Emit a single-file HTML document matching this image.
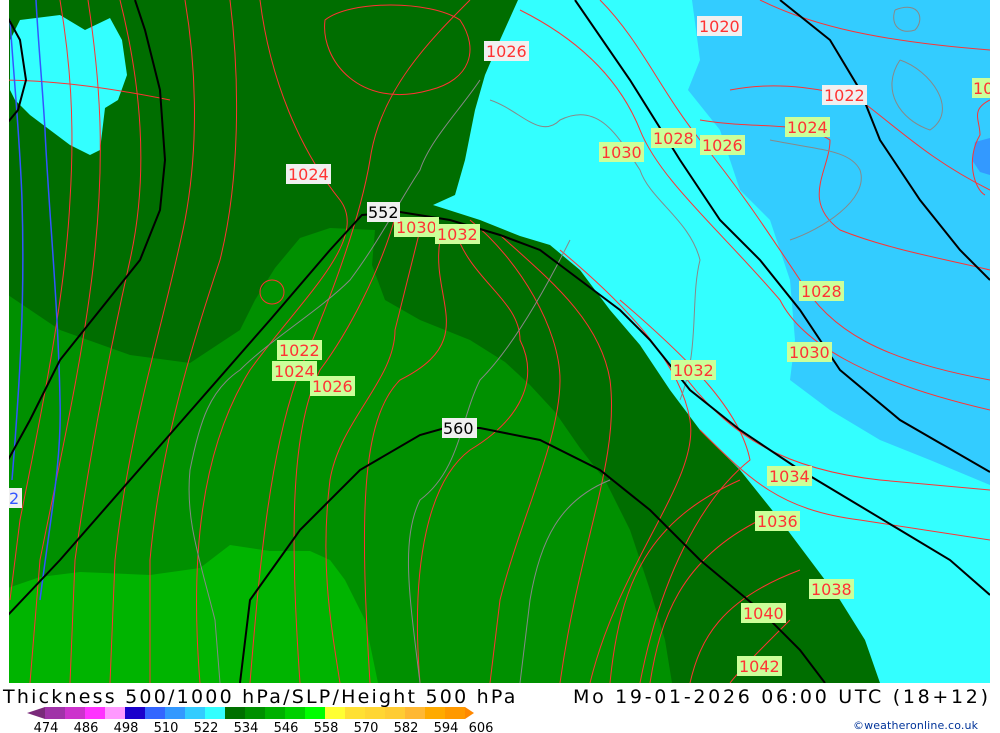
<!DOCTYPE html>
<html><head><meta charset="utf-8"><style>
body{margin:0;background:#fff;width:1000px;height:733px;overflow:hidden;position:relative;font-family:"Liberation Sans",sans-serif}
svg{position:absolute;left:0;top:0}
.lb{font-family:"DejaVu Sans","Liberation Sans",sans-serif;font-size:16px;fill:#ff3333}
</style></head><body>
<svg width="1000" height="733" viewBox="0 0 1000 733">
<defs><clipPath id="m"><rect x="9" y="0" width="981" height="683"/></clipPath></defs>
<g clip-path="url(#m)">
<rect x="0" y="0" width="1000" height="683" fill="#006e00"/>
<path d="M8,295 L60,330 L130,355 L190,363 L240,330 L255,300 L275,268 L300,238 L330,228 L375,230 L372,265 L385,300 L420,320 L470,340 L505,362 L530,385 L555,412 L580,448 L605,480 L630,530 L650,590 L665,640 L672,683 L8,683Z" fill="#009000"/>
<path d="M8,588 L40,577 L80,572 L150,575 L200,568 L230,545 L270,551 L310,551 L330,560 L345,580 L365,620 L378,683 L8,683Z" fill="#00b400"/>
<path d="M10,40 L20,20 L60,15 L85,30 L110,18 L122,40 L127,75 L118,100 L105,108 L100,150 L90,155 L70,145 L50,130 L30,115 L15,100 L10,90Z" fill="#33ffff"/>
<path d="M518,0 L500,40 L485,75 L475,110 L465,160 L455,195 L433,205 L480,220 L520,236 L550,245 L580,270 L610,310 L640,345 L670,390 L700,430 L740,470 L780,520 L810,560 L840,600 L865,640 L880,683 L990,683 L990,0Z" fill="#33ffff"/>
<path d="M692,0 L700,60 L688,90 L720,130 L740,190 L770,220 L790,280 L795,340 L790,380 L830,410 L880,440 L930,460 L990,485 L990,0Z" fill="#33ccff"/>
<path d="M990,138 L975,142 L972,160 L980,172 L990,175Z" fill="#3399ff"/>
<g fill="none" stroke="#ff3333" stroke-width="1">
<path d="M60,0 C70,60 75,120 70,200 C65,300 40,420 20,520 L10,600"/>
<path d="M88,0 C100,80 105,150 95,250 C85,350 60,460 40,560 L30,683"/>
<path d="M120,0 C140,80 150,170 130,260 C110,350 90,450 75,560 L70,683"/>
<path d="M185,0 C195,60 200,140 185,220 C165,320 130,420 115,560 L110,683"/>
<path d="M230,0 C240,80 240,180 220,260 C190,350 160,450 150,560 L150,683"/>
<path d="M325,20 C320,60 360,110 430,90 C470,80 480,50 460,20 C430,0 350,0 325,20Z"/>
<path d="M260,0 C270,80 300,150 340,200 C370,240 300,300 250,370 C200,450 190,560 200,683"/>
<path d="M470,0 C430,40 380,90 370,160 C360,220 330,300 300,370 C270,450 260,560 250,683"/>
<path d="M395,218 C380,270 350,330 320,370 C290,430 290,540 300,683"/>
<path d="M420,230 C410,270 400,310 395,330 C395,380 340,420 330,480 C320,560 330,620 340,683"/>
<path d="M440,240 C430,300 480,340 400,380 C360,420 360,520 370,683"/>
<path d="M455,230 C470,280 520,300 520,340 C540,380 520,420 470,450 C430,480 410,560 420,683"/>
<path d="M470,220 C520,260 560,330 560,380 C560,440 520,520 500,600 L490,683"/>
<path d="M500,235 C550,280 600,320 610,380 C620,460 580,540 560,683"/>
<path d="M560,250 C620,300 680,360 690,420 C700,480 620,560 590,683"/>
<path d="M620,300 C690,360 740,410 750,460 C700,500 660,580 640,683"/>
<path d="M680,370 C730,440 790,470 880,480 L990,490"/>
<path d="M700,430 C750,480 780,510 860,520 L990,540"/>
<path d="M740,480 C650,520 620,580 610,683"/>
<path d="M760,520 C680,560 660,620 650,683"/>
<path d="M800,570 C720,600 700,640 690,683"/>
<path d="M790,620 C760,650 740,670 730,683"/>
<path d="M600,0 C640,40 660,90 700,140 C740,190 760,220 800,280 C830,330 880,360 990,380"/>
<path d="M520,10 C580,40 620,80 640,130 C660,180 720,230 780,300 C800,340 860,380 990,410"/>
<path d="M730,90 C780,80 830,90 860,100 C900,130 930,160 990,190"/>
<path d="M700,120 C760,130 800,120 830,140 C830,170 800,200 840,230 C890,250 950,260 990,270"/>
<path d="M0,80 C60,80 120,90 170,100"/>
<path d="M760,0 C800,20 860,40 990,50"/>
<path d="M990,100 C970,110 980,120 980,135 C965,160 975,190 985,195"/>
<circle cx="272" cy="292" r="12"/>
</g>
<g fill="none" stroke="#3355ff" stroke-width="1.5">
<path d="M36,0 C38,40 42,80 45,130 C48,200 58,300 60,400 C62,460 50,520 40,600"/>
<path d="M10,20 C14,80 20,140 22,200 C25,300 20,380 12,480"/>
</g>
<g fill="none" stroke="#888" stroke-width="1">
<path d="M480,80 C460,110 430,140 420,170 C400,200 380,240 350,280 C320,310 270,340 240,370 C210,390 200,420 190,470 C185,520 200,560 215,620 L220,683"/>
<path d="M490,100 C520,110 540,140 560,120 C600,100 620,140 640,170 C650,200 690,220 700,260 C690,300 700,350 680,400"/>
<path d="M570,240 C540,300 510,350 480,380 C460,420 460,470 420,500 C400,540 410,600 420,683"/>
<path d="M610,480 C560,500 540,540 530,600 L520,683"/>
<path d="M770,140 C820,150 850,150 860,170 C870,200 820,230 790,240"/>
<path d="M895,10 C920,0 925,20 915,30 C900,35 890,25 895,10"/>
<path d="M900,60 C930,70 960,110 930,130 C900,120 880,90 900,60"/>
</g>
<g fill="none" stroke="#000" stroke-width="2">
<path d="M8,18 L20,40 L26,80 L18,110 L8,122"/>
<path d="M135,0 L145,30 L160,90 L165,160 L160,210 L140,260 L100,310 L60,360 L30,420 L8,460"/>
<path d="M8,615 L60,560 L130,480 L200,400 L270,320 L330,250 L362,215 L400,212 L450,220 L500,235 L540,250 L580,280 L620,310 L650,340 L690,390 L740,430 L800,470 L850,500 L900,530 L950,560 L990,595"/>
<path d="M240,683 L250,600 L300,530 L360,470 L420,435 L445,428 L480,428 L540,440 L600,470 L650,510 L700,560 L760,610 L800,650 L825,683"/>
<path d="M575,0 L630,80 L680,160 L720,220 L760,260 L800,310 L840,370 L900,420 L990,472"/>
<path d="M780,0 L830,40 L860,90 L880,140 L920,200 L960,250 L990,280"/>
</g>
<g>
<rect x="697" y="16" width="45" height="20" fill="#f0f0f0"/><text class="lb" x="699" y="32">1020</text>
<rect x="484" y="41" width="45" height="20" fill="#f0f0f0"/><text class="lb" x="486" y="57">1026</text>
<rect x="822" y="85" width="45" height="20" fill="#f0f0f0"/><text class="lb" x="824" y="101">1022</text>
<rect x="286" y="164" width="45" height="20" fill="#f0f0f0"/><text class="lb" x="288" y="180">1024</text>
<rect x="972" y="78" width="20" height="20" fill="#ccff99"/><text class="lb" x="973" y="94">10</text>
<rect x="785" y="117" width="45" height="20" fill="#ccff99"/><text class="lb" x="787" y="133">1024</text>
<rect x="651" y="128" width="45" height="20" fill="#ccff99"/><text class="lb" x="653" y="144">1028</text>
<rect x="700" y="135" width="45" height="20" fill="#ccff99"/><text class="lb" x="702" y="151">1026</text>
<rect x="599" y="142" width="45" height="20" fill="#ccff99"/><text class="lb" x="601" y="158">1030</text>
<rect x="394" y="217" width="45" height="20" fill="#ccff99"/><text class="lb" x="396" y="233">1030</text>
<rect x="435" y="224" width="45" height="20" fill="#ccff99"/><text class="lb" x="437" y="240">1032</text>
<rect x="277" y="340" width="45" height="20" fill="#ccff99"/><text class="lb" x="279" y="356">1022</text>
<rect x="272" y="361" width="45" height="20" fill="#ccff99"/><text class="lb" x="274" y="377">1024</text>
<rect x="310" y="376" width="45" height="20" fill="#ccff99"/><text class="lb" x="312" y="392">1026</text>
<rect x="671" y="360" width="45" height="20" fill="#ccff99"/><text class="lb" x="673" y="376">1032</text>
<rect x="799" y="281" width="45" height="20" fill="#ccff99"/><text class="lb" x="801" y="297">1028</text>
<rect x="787" y="342" width="45" height="20" fill="#ccff99"/><text class="lb" x="789" y="358">1030</text>
<rect x="767" y="466" width="45" height="20" fill="#ccff99"/><text class="lb" x="769" y="482">1034</text>
<rect x="755" y="511" width="45" height="20" fill="#ccff99"/><text class="lb" x="757" y="527">1036</text>
<rect x="809" y="579" width="45" height="20" fill="#ccff99"/><text class="lb" x="811" y="595">1038</text>
<rect x="741" y="603" width="45" height="20" fill="#ccff99"/><text class="lb" x="743" y="619">1040</text>
<rect x="737" y="656" width="45" height="20" fill="#ccff99"/><text class="lb" x="739" y="672">1042</text>
<rect x="367" y="202" width="33" height="20" fill="#f0f0f0"/><text class="lb" style="fill:#000" x="368" y="218">552</text>
<rect x="442" y="418" width="35" height="20" fill="#f0f0f0"/><text class="lb" style="fill:#000" x="443" y="434">560</text>
<rect x="8" y="488" width="14" height="20" fill="#f0f0f0"/><text class="lb" style="fill:#3355ff" x="9" y="504">2</text>
</g>
</g>
<text x="3" y="703" font-family="DejaVu Sans,Liberation Sans,sans-serif" font-size="19" letter-spacing="1.6" textLength="514">Thickness 500/1000 hPa/SLP/Height 500 hPa</text>
<text x="573" y="703" font-family="DejaVu Sans,Liberation Sans,sans-serif" font-size="19" textLength="415">Mo 19-01-2026 06:00 UTC (18+12)</text>
<polygon points="27,713 45,707 45,719" fill="#7a2a7a"/>
<g>
<rect x="45" y="707" width="20" height="12" fill="#a033a8"/>
<rect x="65" y="707" width="20" height="12" fill="#cc33cc"/>
<rect x="85" y="707" width="20" height="12" fill="#ff33ff"/>
<rect x="105" y="707" width="20" height="12" fill="#ff99ff"/>
<rect x="125" y="707" width="20" height="12" fill="#1a00cc"/>
<rect x="145" y="707" width="20" height="12" fill="#3366ff"/>
<rect x="165" y="707" width="20" height="12" fill="#3399ff"/>
<rect x="185" y="707" width="20" height="12" fill="#33ccff"/>
<rect x="205" y="707" width="20" height="12" fill="#33ffff"/>
<rect x="225" y="707" width="20" height="12" fill="#007000"/>
<rect x="245" y="707" width="20" height="12" fill="#009000"/>
<rect x="265" y="707" width="20" height="12" fill="#00b000"/>
<rect x="285" y="707" width="20" height="12" fill="#00d000"/>
<rect x="305" y="707" width="20" height="12" fill="#00ff00"/>
<rect x="325" y="707" width="20" height="12" fill="#ffff33"/>
<rect x="345" y="707" width="20" height="12" fill="#ffe033"/>
<rect x="365" y="707" width="20" height="12" fill="#ffd633"/>
<rect x="385" y="707" width="20" height="12" fill="#ffcc33"/>
<rect x="405" y="707" width="20" height="12" fill="#ffb833"/>
<rect x="425" y="707" width="20" height="12" fill="#ffaa00"/>
<rect x="445" y="707" width="20" height="12" fill="#ff9900"/>
</g>
<polygon points="465,707 474,713 465,719" fill="#ff8800"/>
<g font-family="DejaVu Sans,Liberation Sans,sans-serif" font-size="13" text-anchor="middle">
<text x="46" y="732">474</text><text x="86" y="732">486</text><text x="126" y="732">498</text><text x="166" y="732">510</text><text x="206" y="732">522</text><text x="246" y="732">534</text><text x="286" y="732">546</text><text x="326" y="732">558</text><text x="366" y="732">570</text><text x="406" y="732">582</text><text x="446" y="732">594</text><text x="481" y="732">606</text>
</g>
<text x="853" y="729" font-family="DejaVu Sans,Liberation Sans,sans-serif" font-size="11" fill="#003399" textLength="125">©weatheronline.co.uk</text>
</svg>
</body></html>
